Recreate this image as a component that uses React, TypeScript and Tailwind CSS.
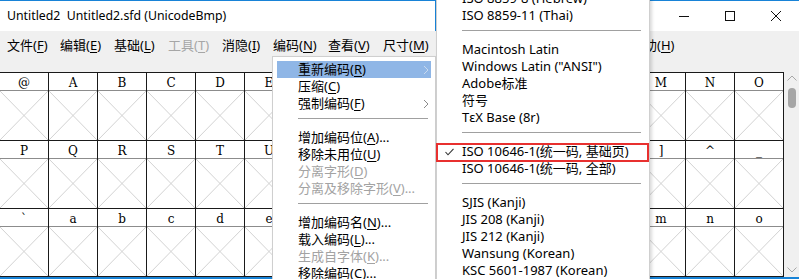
import React from 'react';

const UI = "font-['Noto_Sans','Noto_Sans_CJK_SC',sans-serif]";

function Mn({ t, k, s = '' }: { t: string; k?: string; s?: string }) {
  if (!k) return <span>{t}{s}</span>;
  return (
    <span>
      {t}(<span className="underline underline-offset-[2px] decoration-[1px]">{k}</span>){s}
    </span>
  );
}

const row1 = ['@', 'A', 'B', 'C', 'D', 'E', 'F', 'G', 'H', 'I', 'J', 'K', 'L', 'M', 'N', 'O'];
const row2 = ['P', 'Q', 'R', 'S', 'T', 'U', 'V', 'W', 'X', 'Y', 'Z', '[', '\\', ']', '^', '_'];
const row3 = ['`', 'a', 'b', 'c', 'd', 'e', 'f', 'g', 'h', 'i', 'j', 'k', 'l', 'm', 'n', 'o'];

function GridRow({ chars }: { chars: string[] }) {
  return (
    <div className="flex border-t border-[#1a1a1a]">
      {chars.map((c, i) => (
        <div key={i} className="w-[49px] shrink-0 border-r border-[#1a1a1a] flex flex-col">
          <div className="h-[18px] border-b border-[#8c8c8c] flex items-center justify-center pt-[2px] text-[12px] leading-none text-black font-['DejaVu_Serif',serif]">
            {c}
          </div>
          <svg width="48" height="49" className="block">
            <line x1="0" y1="0" x2="48" y2="49" stroke="#d2d2d2" strokeWidth="1" />
            <line x1="48" y1="0" x2="0" y2="49" stroke="#d2d2d2" strokeWidth="1" />
          </svg>
        </div>
      ))}
    </div>
  );
}

const menuBar = [
  { t: '文件', k: 'F', w: 'w-[53px]' },
  { t: '编辑', k: 'E', w: 'w-[54px]' },
  { t: '基础', k: 'L', w: 'w-[54px]' },
  { t: '工具', k: 'T', w: 'w-[54px]', dis: true },
  { t: '消隐', k: 'I', w: 'w-[51px]' },
  { t: '编码', k: 'N', w: 'w-[55px]' },
  { t: '查看', k: 'V', w: 'w-[55px]' },
  { t: '尺寸', k: 'M', w: 'w-[55px]' },
];

type Item =
  | { sep: true }
  | { t: string; k?: string; s?: string; dis?: boolean; arrow?: boolean; hl?: boolean; check?: boolean; sep?: false };

const menu1: Item[] = [
  { t: '重新编码', k: 'R', arrow: true, hl: true },
  { t: '压缩', k: 'C' },
  { t: '强制编码', k: 'F', arrow: true },
  { sep: true },
  { t: '增加编码位', k: 'A', s: '...' },
  { t: '移除未用位', k: 'U' },
  { t: '分离字形', k: 'D', dis: true },
  { t: '分离及移除字形', k: 'V', s: '...', dis: true },
  { sep: true },
  { t: '增加编码名', k: 'N', s: '...' },
  { t: '载入编码', k: 'L', s: '...' },
  { t: '生成自字体', k: 'K', s: '...', dis: true },
  { t: '移除编码', k: 'C', s: '...' },
  { t: '' },
];

const menu2: Item[] = [
  { t: 'ISO 8859-8 (Hebrew)' },
  { t: 'ISO 8859-11 (Thai)' },
  { sep: true },
  { t: 'Macintosh Latin' },
  { t: 'Windows Latin ("ANSI")' },
  { t: 'Adobe标准' },
  { t: '符号' },
  { t: 'TεX Base (8r)' },
  { sep: true },
  { t: 'ISO 10646-1(统一码, 基础页)', check: true },
  { t: 'ISO 10646-1(统一码, 全部)' },
  { sep: true },
  { t: 'SJIS (Kanji)' },
  { t: 'JIS 208 (Kanji)' },
  { t: 'JIS 212 (Kanji)' },
  { t: 'Wansung (Korean)' },
  { t: 'KSC 5601-1987 (Korean)' },
  { t: 'Big5 (Chinese)' },
];

function Chevron({ light }: { light?: boolean }) {
  return (
    <svg width="6" height="10" viewBox="0 0 6 10" className="absolute right-[2px] top-[4px]">
      <polyline points="1,1 5,5 1,9" fill="none" stroke={light ? '#c9d9ee' : '#8a8a8a'} strokeWidth="1" />
    </svg>
  );
}

function Menu1() {
  return (
    <div className={`absolute left-[272px] top-[56px] w-[164px] h-[240px] bg-white border border-[#cfcfcf] px-[4px] pt-[4px] shadow-[2px_2px_3px_rgba(0,0,0,0.15)] ${UI}`}>
      {menu1.map((it, i) =>
        it.sep ? (
          <div key={i} className="h-[17px] pl-[21px] pr-[3px] pt-[6px]">
            <div className="h-px bg-[#a0a0a0]" />
          </div>
        ) : (
          <div
            key={i}
            className={`relative h-[17px] pl-[21px] flex items-center text-[13px] leading-[17px] whitespace-nowrap ${
              it.hl ? 'bg-[#8fb6e6]' : ''
            } ${it.dis ? 'text-[#a3a3a3]' : 'text-black'}`}
          >
            {it.t && <Mn t={it.t} k={it.k} s={it.s} />}
            {it.arrow && <Chevron light={it.hl} />}
          </div>
        )
      )}
    </div>
  );
}

function Menu2() {
  return (
    <div className={`absolute left-[436px] top-[-11px] w-[214px] h-[300px] bg-white border border-[#cfcfcf] shadow-[2px_2px_3px_rgba(0,0,0,0.15)] ${UI}`}>
      {menu2.map((it, i) =>
        it.sep ? (
          <div key={i} className="h-[17px] pl-[25px] pr-[8px] pt-[6px]">
            <div className="h-px bg-[#a0a0a0]" />
          </div>
        ) : (
          <div key={i} className="relative h-[17px] pl-[25px] flex items-center text-[13px] leading-[17px] whitespace-nowrap text-black">
            {it.check && (
              <svg width="9" height="8" viewBox="0 0 9 8" className="absolute left-[8px] top-[5px]">
                <polyline points="0.5,4 3,6.8 8.5,0.8" fill="none" stroke="#333" strokeWidth="1.1" />
              </svg>
            )}
            {it.t}
          </div>
        )
      )}
    </div>
  );
}

export default function App() {
  return (
    <div className={`relative w-[799px] h-[279px] overflow-hidden bg-white ${UI}`}>
      <div className="h-px bg-[#1883d7]" />
      {/* Title bar */}
      <div className="h-[30px] flex items-center justify-between bg-white">
        <div className="pl-[7px] text-[12.3px] text-black whitespace-pre">Untitled2  Untitled2.sfd (UnicodeBmp)</div>
        <div className="flex h-full">
          <div className="w-[46px] h-full flex items-center justify-center">
            <svg width="10" height="10" viewBox="0 0 10 10">
              <line x1="0" y1="5.5" x2="10" y2="5.5" stroke="#111" strokeWidth="1" />
            </svg>
          </div>
          <div className="w-[46px] h-full flex items-center justify-center">
            <svg width="10" height="10" viewBox="0 0 10 10">
              <rect x="0.5" y="0.5" width="9" height="9" fill="none" stroke="#111" strokeWidth="1" />
            </svg>
          </div>
          <div className="w-[46px] h-full flex items-center justify-center">
            <svg width="10" height="10" viewBox="0 0 10 10">
              <line x1="0" y1="0" x2="10" y2="10" stroke="#111" strokeWidth="1" />
              <line x1="10" y1="0" x2="0" y2="10" stroke="#111" strokeWidth="1" />
            </svg>
          </div>
        </div>
      </div>
      {/* Menu bar */}
      <div className="h-[41px] bg-[#f0f0f0]">
        <div className="h-[29px] flex items-center pl-[7px] text-[13px]">
          {menuBar.map((m, i) => (
            <div key={i} className={`${m.w} shrink-0 whitespace-nowrap ${m.dis ? 'text-[#a6a6a6]' : 'text-black'}`}>
              <Mn t={m.t} k={m.k} />
            </div>
          ))}
          <div className="w-[193px] shrink-0" />
          <div className="whitespace-nowrap text-black">
            <Mn t="帮助" k="H" />
          </div>
        </div>
      </div>
      {/* Font view grid */}
      <div className="flex h-[205px]">
        <div className="w-[784px] flex flex-col border-b border-[#1a1a1a]">
          <GridRow chars={row1} />
          <GridRow chars={row2} />
          <GridRow chars={row3} />
        </div>
        <div className="w-[15px] bg-[#f0f0f0] flex flex-col items-center justify-between pt-[3px] pb-[4px]">
          <div className="flex flex-col items-center">
            <svg width="10" height="6" viewBox="0 0 10 6">
              <polyline points="0.5,5.5 5,1 9.5,5.5" fill="none" stroke="#a8a8a8" strokeWidth="1" />
            </svg>
            <div className="mt-[7px] w-[8px] h-[20px] rounded-full bg-[#a6a6a6]" />
          </div>
          <svg width="10" height="6" viewBox="0 0 10 6">
            <polyline points="0.5,0.5 5,5 9.5,0.5" fill="none" stroke="#a8a8a8" strokeWidth="1" />
          </svg>
        </div>
      </div>
      <div className="h-[2px] bg-[#1883d7]" />

      {/* Popups */}
      <div className="absolute left-[435px] top-0 w-px h-[31px] bg-[#1883d7]" />
      <Menu1 />
      <Menu2 />
      <div className="absolute left-[436px] top-[143px] w-[213px] h-[19px] border-2 border-[#e8302f]" />
    </div>
  );
}
